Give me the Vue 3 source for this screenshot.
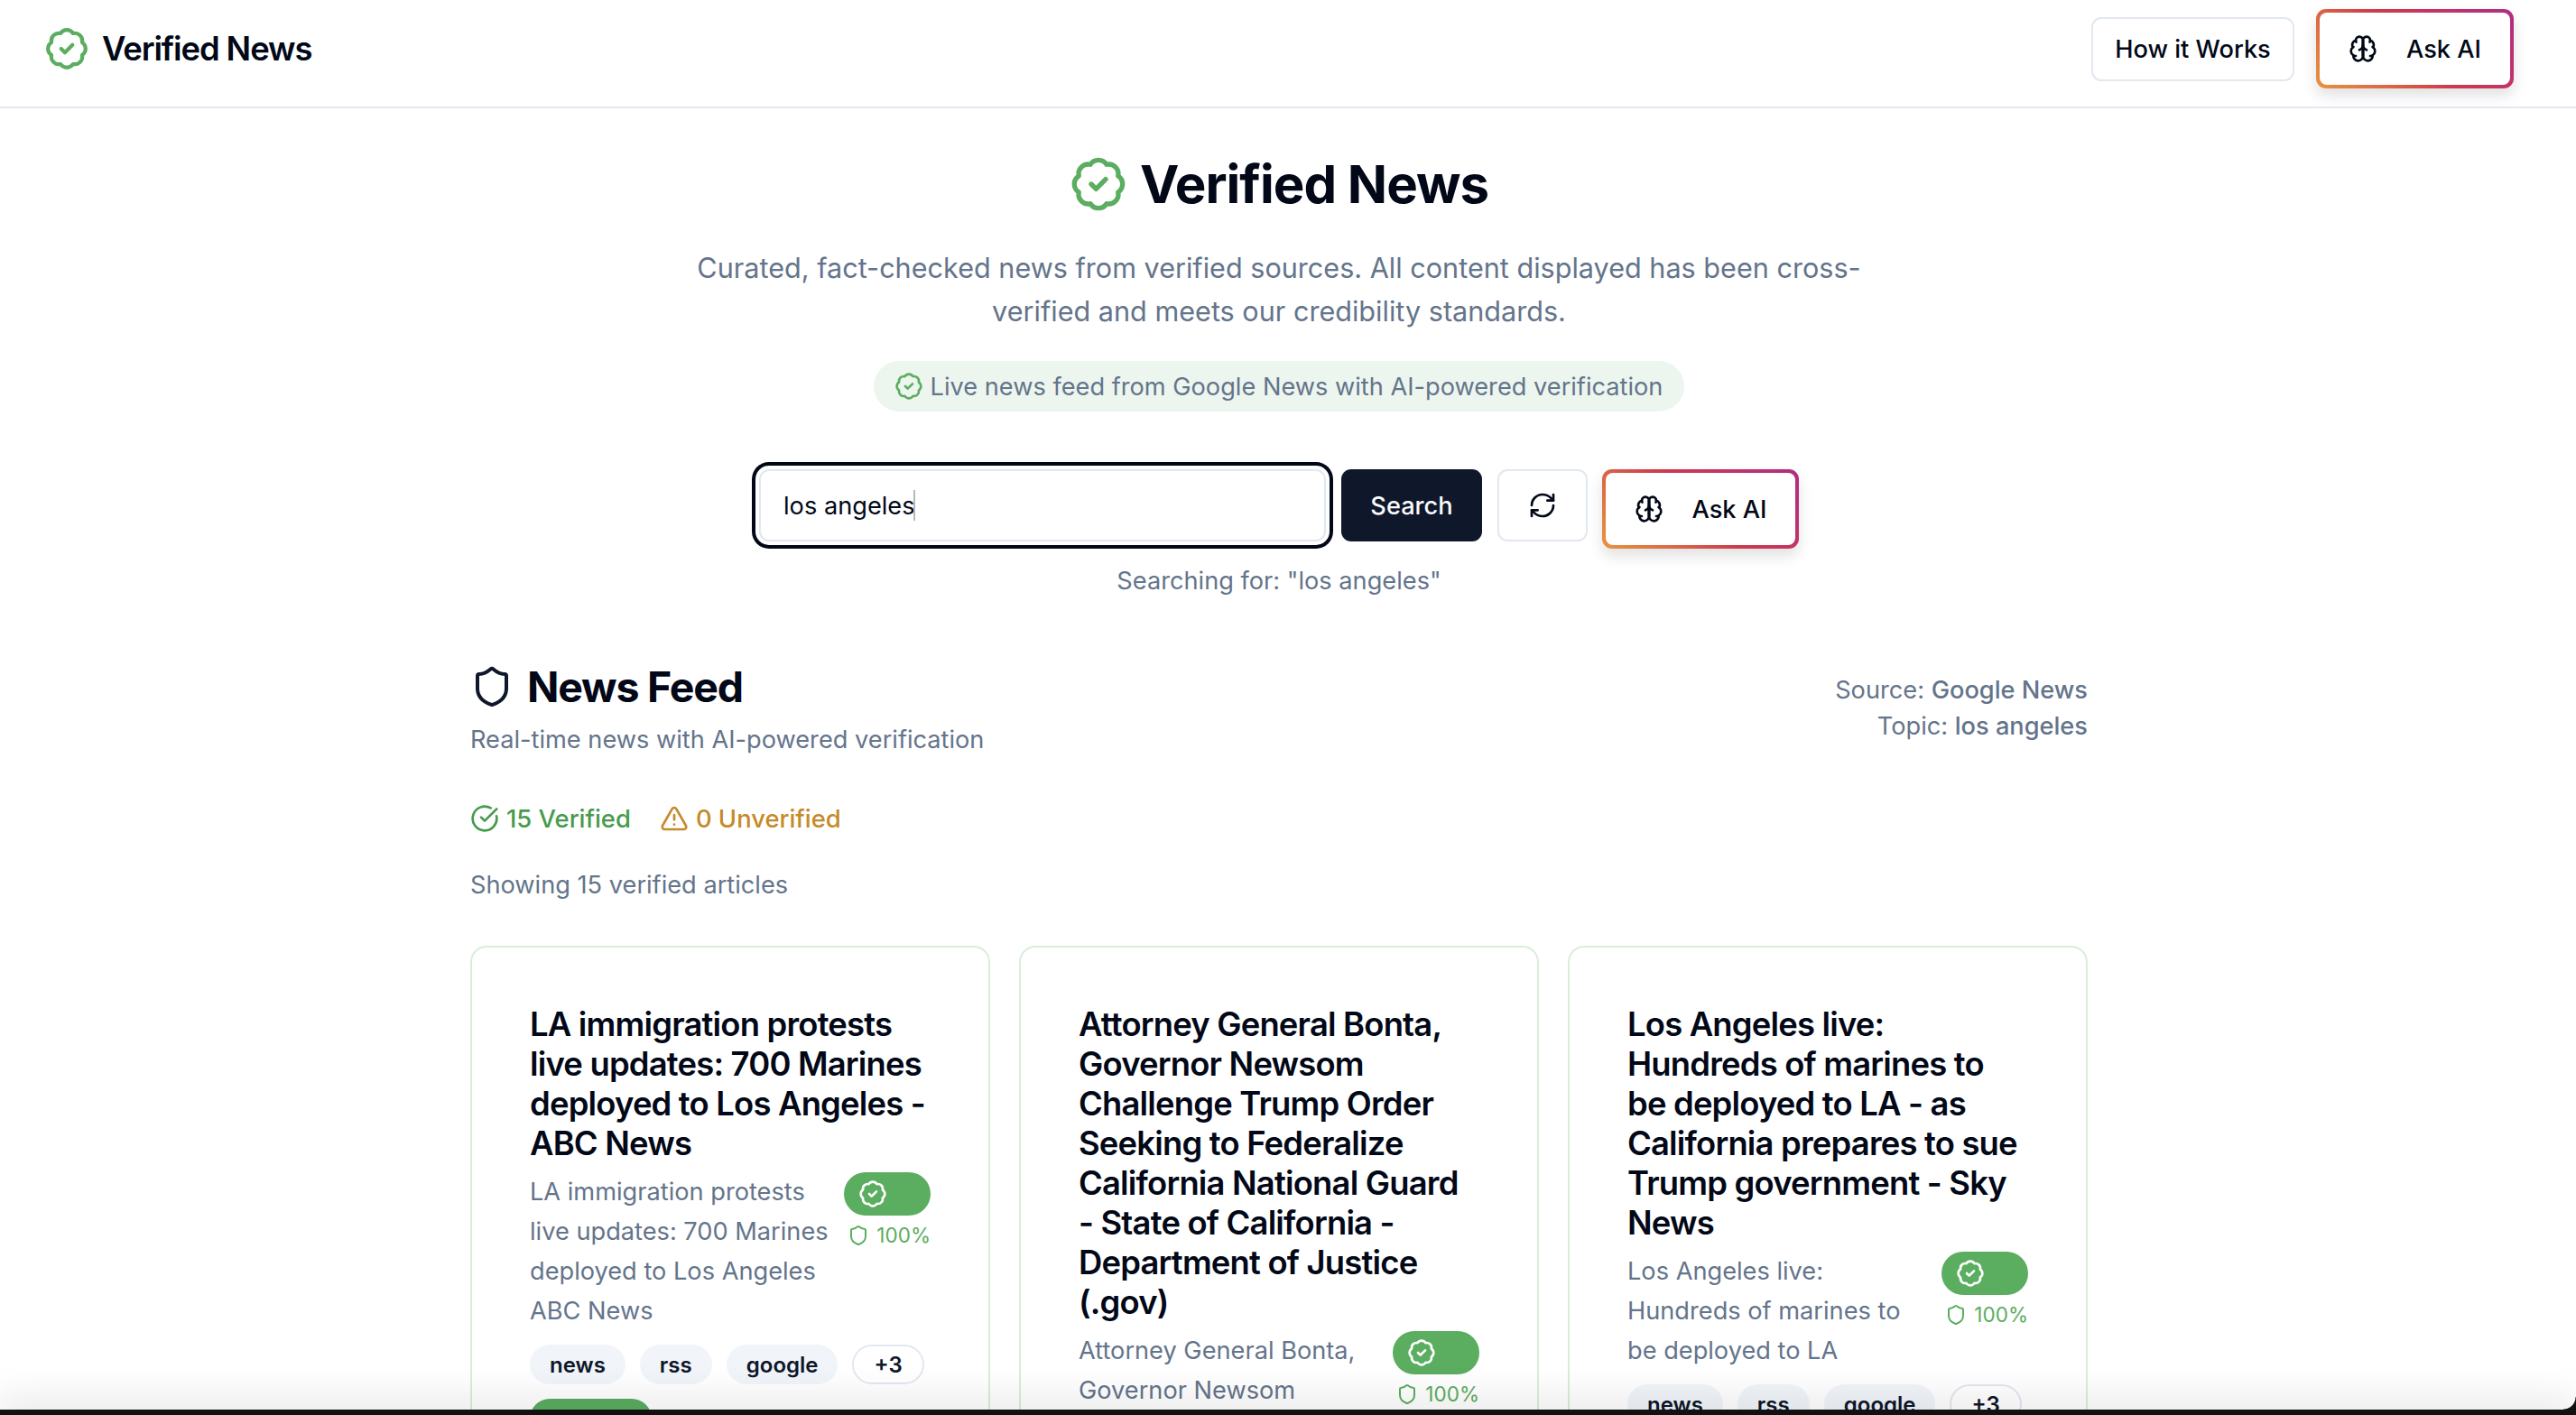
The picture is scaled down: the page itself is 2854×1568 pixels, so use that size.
<script setup>
const cards = [
  {
    title: 'LA immigration protests live updates: 700 Marines deployed to Los Angeles - ABC News',
    text: 'LA immigration protests live updates: 700 Marines deployed to Los Angeles ABC News'
  },
  {
    title: 'Attorney General Bonta, Governor Newsom Challenge Trump Order Seeking to Federalize California National Guard - State of California - Department of Justice (.gov)',
    text: 'Attorney General Bonta, Governor Newsom Challenge Trump Order Seeking to Federalize'
  },
  {
    title: 'Los Angeles live: Hundreds of marines to be deployed to LA - as California prepares to sue Trump government - Sky News',
    text: 'Los Angeles live: Hundreds of marines to be deployed to LA'
  }
]
const tags = ['news', 'rss', 'google']
const badgePath = 'M3.85 8.62a4 4 0 0 1 4.78-4.77 4 4 0 0 1 6.74 0 4 4 0 0 1 4.78 4.78 4 4 0 0 1 0 6.74 4 4 0 0 1-4.77 4.78 4 4 0 0 1-6.75 0 4 4 0 0 1-4.78-4.77 4 4 0 0 1 0-6.76Z'
const brainA = 'M12 5a3 3 0 1 0-5.997.125 4 4 0 0 0-2.526 5.77 4 4 0 0 0 .556 6.588A4 4 0 1 0 12 18Z'
const brainB = 'M12 5a3 3 0 1 1 5.997.125 4 4 0 0 1 2.526 5.77 4 4 0 0 1-.556 6.588A4 4 0 1 1 12 18Z'
const brainC = 'M15 13a4.5 4.5 0 0 1-3-4 4.5 4.5 0 0 1-3 4'
const brainD = 'M17.599 6.5a3 3 0 0 0 .399-1.375M6.003 5.125A3 3 0 0 0 6.401 6.5M3.477 10.896a4 4 0 0 1 .585-.396M19.938 10.5a4 4 0 0 1 .585.396M6 18a4 4 0 0 1-1.967-.516M19.967 17.484A4 4 0 0 1 18 18'
const shieldPath = 'M20 13c0 5-3.5 7.5-7.66 8.95a1 1 0 0 1-.67-.01C7.5 20.5 4 18 4 13V6a1 1 0 0 1 1-1c2 0 4.5-1.2 6.24-2.72a1.17 1.17 0 0 1 1.52 0C14.51 3.81 17 5 19 5a1 1 0 0 1 1 1Z'
</script>

<template>
  <div class="page">
    <header class="topbar">
      <div class="brand">
        <svg class="brand-icon" viewBox="0 0 24 24" fill="none" stroke="currentColor" stroke-width="2" stroke-linecap="round" stroke-linejoin="round">
          <path :d="badgePath" /><path d="m9 12 2 2 4-4" />
        </svg>
        <span>Verified News</span>
      </div>
      <div class="top-actions">
        <button class="btn-outline">How it Works</button>
        <button class="btn-ai">
          <span class="ai-inner">
            <svg class="brain" viewBox="0 0 24 24" fill="none" stroke="currentColor" stroke-width="2" stroke-linecap="round" stroke-linejoin="round">
              <path :d="brainA" /><path :d="brainB" /><path :d="brainC" /><path :d="brainD" /><path d="M12 18V5" />
            </svg>
            Ask AI
          </span>
        </button>
      </div>
    </header>

    <main class="main">
      <div class="content">
        <section class="hero">
          <h1>
            <svg class="hero-icon" viewBox="0 0 24 24" fill="none" stroke="currentColor" stroke-width="2" stroke-linecap="round" stroke-linejoin="round">
              <path :d="badgePath" /><path d="m9 12 2 2 4-4" />
            </svg>
            Verified News
          </h1>
          <p class="lead">Curated, fact-checked news from verified sources. All content displayed has been cross-verified and meets our credibility standards.</p>
          <div class="live-pill">
            <svg class="pill-icon" viewBox="0 0 24 24" fill="none" stroke="currentColor" stroke-width="2" stroke-linecap="round" stroke-linejoin="round">
              <path :d="badgePath" /><path d="m9 12 2 2 4-4" />
            </svg>
            Live news feed from Google News with AI-powered verification
          </div>
        </section>

        <section class="search-row">
          <div class="search-box"><input class="search-input" value="los angeles" /><i class="caret"></i></div>
          <button class="btn-search">Search</button>
          <button class="btn-refresh">
            <svg viewBox="0 0 24 24" fill="none" stroke="currentColor" stroke-width="2" stroke-linecap="round" stroke-linejoin="round">
              <path d="M3 12a9 9 0 0 1 9-9 9.75 9.75 0 0 1 6.74 2.74L21 8" /><path d="M21 3v5h-5" />
              <path d="M21 12a9 9 0 0 1-9 9 9.75 9.75 0 0 1-6.74-2.74L3 16" /><path d="M8 16H3v5" />
            </svg>
          </button>
          <button class="btn-ai btn-ai-row">
            <span class="ai-inner">
              <svg class="brain" viewBox="0 0 24 24" fill="none" stroke="currentColor" stroke-width="2" stroke-linecap="round" stroke-linejoin="round">
                <path :d="brainA" /><path :d="brainB" /><path :d="brainC" /><path :d="brainD" /><path d="M12 18V5" />
              </svg>
              Ask AI
            </span>
          </button>
        </section>
        <p class="searching">Searching for: "los angeles"</p>

        <section class="feed">
          <div class="feed-head">
            <div>
              <h2>
                <svg class="shield" viewBox="0 0 24 24" fill="none" stroke="currentColor" stroke-width="2" stroke-linecap="round" stroke-linejoin="round"><path :d="shieldPath" /></svg>
                News Feed
              </h2>
              <p class="feed-sub">Real-time news with AI-powered verification</p>
            </div>
            <div class="source">
              <div>Source: <b>Google News</b></div>
              <div>Topic: <b>los angeles</b></div>
            </div>
          </div>

          <div class="counts">
            <span class="count-ok">
              <svg viewBox="0 0 24 24" fill="none" stroke="currentColor" stroke-width="2" stroke-linecap="round" stroke-linejoin="round">
                <path d="M21.8 10A10 10 0 1 1 17 3.34" /><path d="m9 11 3 3L22 4" />
              </svg>
              15 Verified
            </span>
            <span class="count-warn">
              <svg viewBox="0 0 24 24" fill="none" stroke="currentColor" stroke-width="2" stroke-linecap="round" stroke-linejoin="round">
                <path d="m21.73 18-8-14a2 2 0 0 0-3.48 0l-8 14A2 2 0 0 0 4 21h16a2 2 0 0 0 1.73-3" /><path d="M12 9v4" /><path d="M12 17h.01" />
              </svg>
              0 Unverified
            </span>
          </div>
          <p class="showing">Showing 15 verified articles</p>

          <div class="grid">
            <article v-for="card in cards" :key="card.title" class="card">
              <h3>{{ card.title }}</h3>
              <div class="card-body">
                <p>{{ card.text }}</p>
                <div class="score">
                  <span class="score-pill">
                    <svg viewBox="0 0 24 24" fill="none" stroke="currentColor" stroke-width="2" stroke-linecap="round" stroke-linejoin="round">
                      <path :d="badgePath" /><path d="m9 12 2 2 4-4" />
                    </svg>
                  </span>
                  <span class="score-val">
                    <svg viewBox="0 0 24 24" fill="none" stroke="currentColor" stroke-width="2" stroke-linecap="round" stroke-linejoin="round"><path :d="shieldPath" /></svg>
                    100%
                  </span>
                </div>
              </div>
              <div class="tags">
                <span v-for="t in tags" :key="t" class="tag">{{ t }}</span>
                <span class="tag tag-more">+3</span>
                <span class="tag tag-ok">Verified</span>
              </div>
            </article>
          </div>
        </section>
      </div>
    </main>

    <div class="dock"></div>
  </div>
</template>

<style>
html, body {
  margin: 0;
  height: 100%;
  overflow: hidden;
  background: #fff;
}
</style>

<style scoped>
.page {
  height: 1568px;
  overflow: hidden;
  position: relative;
  font-family: Inter, "Liberation Sans", sans-serif;
  color: #020817;
}

button {
  font-family: inherit;
  cursor: pointer;
}

.topbar {
  height: 120px;
  box-sizing: border-box;
  border-bottom: 2px solid #e2e8f0;
  padding: 10px 69px 20px 49px;
  display: flex;
  align-items: center;
  justify-content: space-between;
}

.brand {
  display: flex;
  align-items: center;
  gap: 14px;
  font-size: 36.4px;
  font-weight: 600;
  letter-spacing: -1.1px;
}

.brand-icon {
  width: 50px;
  height: 50px;
  color: #5bad60;
}

.top-actions {
  display: flex;
  align-items: center;
  gap: 24px;
}

.btn-outline {
  height: 71px;
  width: 225px;
  background: #fff;
  border: 2px solid #e2e8f0;
  border-radius: 11px;
  font-size: 27.2px;
  font-weight: 500;
  color: #020817;
}

.btn-ai {
  width: 219px;
  height: 88px;
  padding: 4px;
  border: none;
  border-radius: 11px;
  background: linear-gradient(45deg, #e8943f, #dc6a45 25%, #cd3a4d 50%, #c2336b 75%, #ae2d85);
  box-shadow: 0 8px 16px rgba(0, 0, 0, 0.12);
  color: #020817;
}

.btn-ai-row {
  width: 218px;
  margin-left: -1px;
}

.ai-inner {
  height: 100%;
  border-radius: 8px;
  background: #fff;
  display: flex;
  align-items: center;
  justify-content: center;
  gap: 32px;
  font-size: 27.2px;
  font-weight: 500;
}

.brain {
  width: 32px;
  height: 32px;
}

.main {
  width: 2834px;
}

.content {
  width: 1792px;
  margin: 0 auto;
}

.hero {
  display: flex;
  flex-direction: column;
  align-items: center;
  padding-top: 48px;
}

h1 {
  margin: 0;
  display: flex;
  align-items: center;
  gap: 14px;
  font-size: 58.2px;
  line-height: 72px;
  font-weight: 700;
  letter-spacing: -1px;
}

.hero-icon {
  width: 64px;
  height: 64px;
  color: #5bad60;
}

.lead {
  margin: 33px 0 0;
  width: 1300px;
  text-align: center;
  font-size: 30.6px;
  line-height: 48px;
  color: #64748b;
}

.live-pill {
  margin-top: 31px;
  height: 56px;
  padding: 0 24px 0 23px;
  display: flex;
  align-items: center;
  gap: 8px;
  border-radius: 28px;
  background: #edf6ee;
  color: #64748b;
  font-size: 27.2px;
}

.pill-icon {
  width: 32px;
  height: 32px;
  color: #5bad60;
}

.search-row {
  margin-top: 64px;
  display: flex;
  justify-content: center;
  align-items: flex-start;
  gap: 17px;
}

.search-box {
  position: relative;
  width: 628px;
  height: 80px;
}

.search-input {
  width: 100%;
  height: 100%;
  box-sizing: border-box;
  border: 2px solid #e2e8f0;
  border-radius: 11px;
  outline: none;
  box-shadow: 0 0 0 4px #fff, 0 0 0 8px #020817;
  padding: 0 25px;
  font-family: inherit;
  font-size: 27.2px;
  color: #020817;
  background: #fff;
}

.caret {
  position: absolute;
  left: 171px;
  top: 23px;
  width: 2px;
  height: 34px;
  background: #b8b8b8;
}

.btn-search {
  width: 156px;
  height: 80px;
  background: #0f172a;
  border: none;
  border-radius: 11px;
  color: #f8fafc;
  font-size: 27.2px;
  font-weight: 500;
}

.btn-refresh {
  width: 100px;
  height: 80px;
  background: #fff;
  border: 2px solid #e2e8f0;
  border-radius: 11px;
  color: #020817;
  display: flex;
  align-items: center;
  justify-content: center;
  padding: 0;
}

.btn-refresh svg {
  width: 32px;
  height: 32px;
}

.searching {
  margin: 16px 0 0;
  text-align: center;
  font-size: 27.2px;
  line-height: 40px;
  color: #64748b;
}

.feed {
  margin-top: 68px;
}

.feed-head {
  display: flex;
  justify-content: space-between;
  align-items: flex-start;
}

h2 {
  margin: 0;
  display: flex;
  align-items: center;
  gap: 15px;
  font-size: 46.5px;
  line-height: 58px;
  font-weight: 700;
  letter-spacing: -1.2px;
}

.shield {
  width: 48px;
  height: 48px;
  color: #0f172a;
}

.feed-sub {
  margin: 10px 0 0;
  font-size: 27.2px;
  line-height: 40px;
  color: #64748b;
}

.source {
  padding-top: 13px;
  text-align: right;
  font-size: 27.2px;
  line-height: 40px;
  color: #64748b;
}

.source b {
  font-weight: 500;
}

.counts {
  margin-top: 47px;
  display: flex;
  gap: 32px;
  font-size: 27.4px;
  line-height: 40px;
  font-weight: 500;
}

.counts span {
  display: flex;
  align-items: center;
  gap: 8px;
}

.counts svg {
  width: 32px;
  height: 32px;
}

.count-ok {
  color: #479b4c;
}

.count-warn {
  color: #c58a2a;
}

.showing {
  margin: 34px 0 0;
  font-size: 27.2px;
  line-height: 40px;
  color: #64748b;
}

.grid {
  margin-top: 47px;
  display: grid;
  grid-template-columns: repeat(3, 1fr);
  gap: 32px;
}

.card {
  box-sizing: border-box;
  border: 2px solid #d9eeda;
  border-radius: 18px;
  padding: 63px 64px 64px;
}

h3 {
  margin: 0;
  padding-right: 5px;
  font-size: 36.4px;
  line-height: 44px;
  font-weight: 600;
  letter-spacing: -0.8px;
}

.card-body {
  margin-top: 10px;
  display: flex;
  gap: 12px;
  align-items: flex-start;
}

.card-body p {
  flex: 1;
  margin: 0;
  font-size: 27.2px;
  line-height: 44px;
  color: #64748b;
}

.score {
  flex: none;
  width: 96px;
  display: flex;
  flex-direction: column;
  align-items: flex-end;
  gap: 4px;
}

.score-pill {
  width: 96px;
  height: 48px;
  border-radius: 24px;
  background: #5bad60;
  color: #fff;
  display: flex;
  align-items: center;
  padding-left: 16px;
  box-sizing: border-box;
}

.score-pill svg {
  width: 32px;
  height: 32px;
}

.score-val {
  display: flex;
  align-items: center;
  gap: 8px;
  font-size: 22.5px;
  line-height: 36px;
  color: #5bad60;
}

.score-val svg {
  width: 24px;
  height: 24px;
}

.tags {
  margin-top: 15px;
  display: flex;
  flex-wrap: wrap;
  gap: 16px;
}

.tag {
  height: 44px;
  padding: 0 22px;
  border-radius: 22px;
  display: flex;
  align-items: center;
  background: #f1f5f9;
  font-size: 24px;
  font-weight: 600;
  color: #0f172a;
}

.tag-more {
  background: #fff;
  border: 2px solid #e2e8f0;
  box-sizing: border-box;
  padding: 0 22px;
}

.tag-ok {
  background: #5bad60;
  color: #fff;
}

.dock {
  position: absolute;
  left: 0;
  right: 0;
  bottom: 0;
  height: 6px;
  background: #111;
  box-shadow: 0 0 44px 4px rgba(0, 0, 0, 0.22);
}

.dock::after {
  content: "";
  position: absolute;
  right: 0;
  bottom: 6px;
  width: 14px;
  height: 14px;
  background: radial-gradient(circle at 0 0, transparent 13px, #111 14px);
}
</style>
